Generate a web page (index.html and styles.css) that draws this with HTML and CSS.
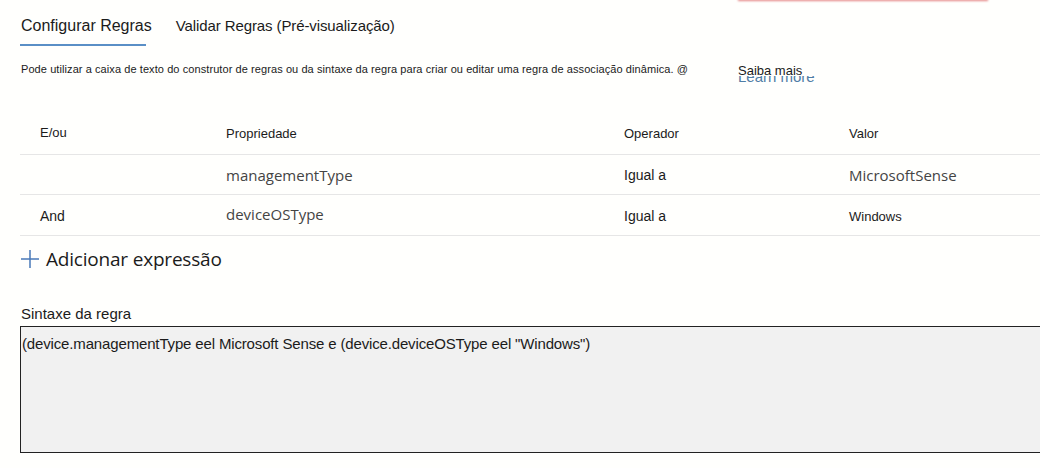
FILE: index.html
```html
<!DOCTYPE html>
<html lang="pt">
<head>
    <meta charset="UTF-8">
    <meta name="viewport" content="width=device-width, initial-scale=1.0">
    <title>Regras de associação dinâmica</title>
    <link rel="stylesheet" href="styles.css">
</head>
<body>
    <div class="top-mark"></div>

    <nav class="tabs">
        <a class="tab active">Configurar Regras</a>
        <a class="tab small">Validar Regras (Pré-visualização)</a>
    </nav>

    <div class="intro">
        <p>Pode utilizar a caixa de texto do construtor de regras ou da sintaxe da regra para criar ou editar uma regra de associação dinâmica. @</p>
        <div class="more">
            <span class="more-en">Learn more</span>
            <span class="more-pt">Saiba mais</span>
        </div>
    </div>

    <div class="rules">
        <div class="row head">
            <span>E/ou</span>
            <span>Propriedade</span>
            <span>Operador</span>
            <span>Valor</span>
        </div>
        <div class="row">
            <span></span>
            <span class="field">managementType</span>
            <span class="op">Igual a</span>
            <span class="field">MicrosoftSense</span>
        </div>
        <div class="row low">
            <span class="op">And</span>
            <span class="field">deviceOSType</span>
            <span class="op">Igual a</span>
            <span class="val">Windows</span>
        </div>
    </div>

    <button class="add">
        <svg width="20" height="20" viewBox="0 0 20 20"><path d="M10 1v18M1 10h18" stroke="#4a7ab8" stroke-width="1.5" fill="none"/></svg>
        Adicionar expressão
    </button>

    <label class="syntax-label" for="syntax">Sintaxe da regra</label>
    <div class="syntax" id="syntax">(device.managementType eel Microsoft Sense e (device.deviceOSType eel "Windows")</div>
</body>
</html>
```

FILE: styles.css
```css
body {
    margin: 0;
    background: #fffffd;
    color: #1b1b1b;
    font-family: "Liberation Sans", Arial, sans-serif;
    position: relative;
    overflow: hidden;
}

/* faint red stroke left at the top edge */
.top-mark {
    position: absolute;
    top: -2px;
    left: 738px;
    width: 250px;
    height: 3px;
    background: #d43a3a;
    filter: blur(1px);
    opacity: 0.6;
}

.tabs {
    display: flex;
    align-items: baseline;
    gap: 22px;
    padding: 17px 0 0 20px;
}
.tab {
    position: relative;
    font-size: 16px;
    padding: 0 1px 11px 1px;
    color: #1b1b1b;
}
.tab.small {
    font-size: 15px;
    letter-spacing: -0.1px;
}
.tab.active::after {
    content: "";
    position: absolute;
    left: 0;
    bottom: 0;
    width: 126px;
    height: 2px;
    background: #5a8fc6;
}

.intro {
    display: flex;
    align-items: flex-start;
    padding: 17px 0 0 21px;
    height: 30px;
}
.intro p {
    margin: 0;
    font-size: 11px;
    width: 717px;
    letter-spacing: 0.08px;
}
.more {
    position: relative;
    height: 20px;
    overflow: hidden;
    font-size: 13px;
}
.more-en {
    position: absolute;
    top: 5px;
    left: 0;
    color: #4f7da6;
    font-size: 15px;
    white-space: nowrap;
}
.more-pt {
    position: relative;
    display: block;
    background: #fffffd;
    height: 13px;
    line-height: 15px;
    padding-right: 20px;
}

.rules {
    margin: 20px 0 0 20px;
}
.row {
    display: grid;
    grid-template-columns: 186px 398px 225px 1fr;
    align-items: center;
    padding-left: 20px;
    height: 39px;
    border-bottom: 1px solid #e6e6e6;
    font-size: 14px;
}
.row.head {
    height: 41px;
    font-size: 13px;
}
.row.head span:first-child {
    margin-top: -2px;
}
.row.low {
    height: 38px;
    padding-top: 2px;
}
.field {
    font-family: "Open Sans", "Noto Sans", sans-serif;
    font-size: 15px;
    color: #444;
}
.row.low .field {
    margin-top: -4px;
}
.val {
    font-size: 13px;
}

.add {
    display: flex;
    align-items: center;
    gap: 6px;
    margin: 10px 0 0 20px;
    padding: 0;
    border: none;
    background: none;
    font-family: "Open Sans", "Noto Sans", sans-serif;
    font-size: 19px;
    letter-spacing: -0.2px;
    color: #1b1b1b;
}

.syntax-label {
    display: block;
    margin: 33px 0 0 21px;
    font-size: 15px;
}
.syntax {
    margin: 4px 0 0 20px;
    height: 117px;
    width: 1030px;
    background: #f1f1f1;
    border: 1px solid #222;
    padding: 8px 0 0 1px;
    font-size: 15px;
    letter-spacing: -0.15px;
}
```
